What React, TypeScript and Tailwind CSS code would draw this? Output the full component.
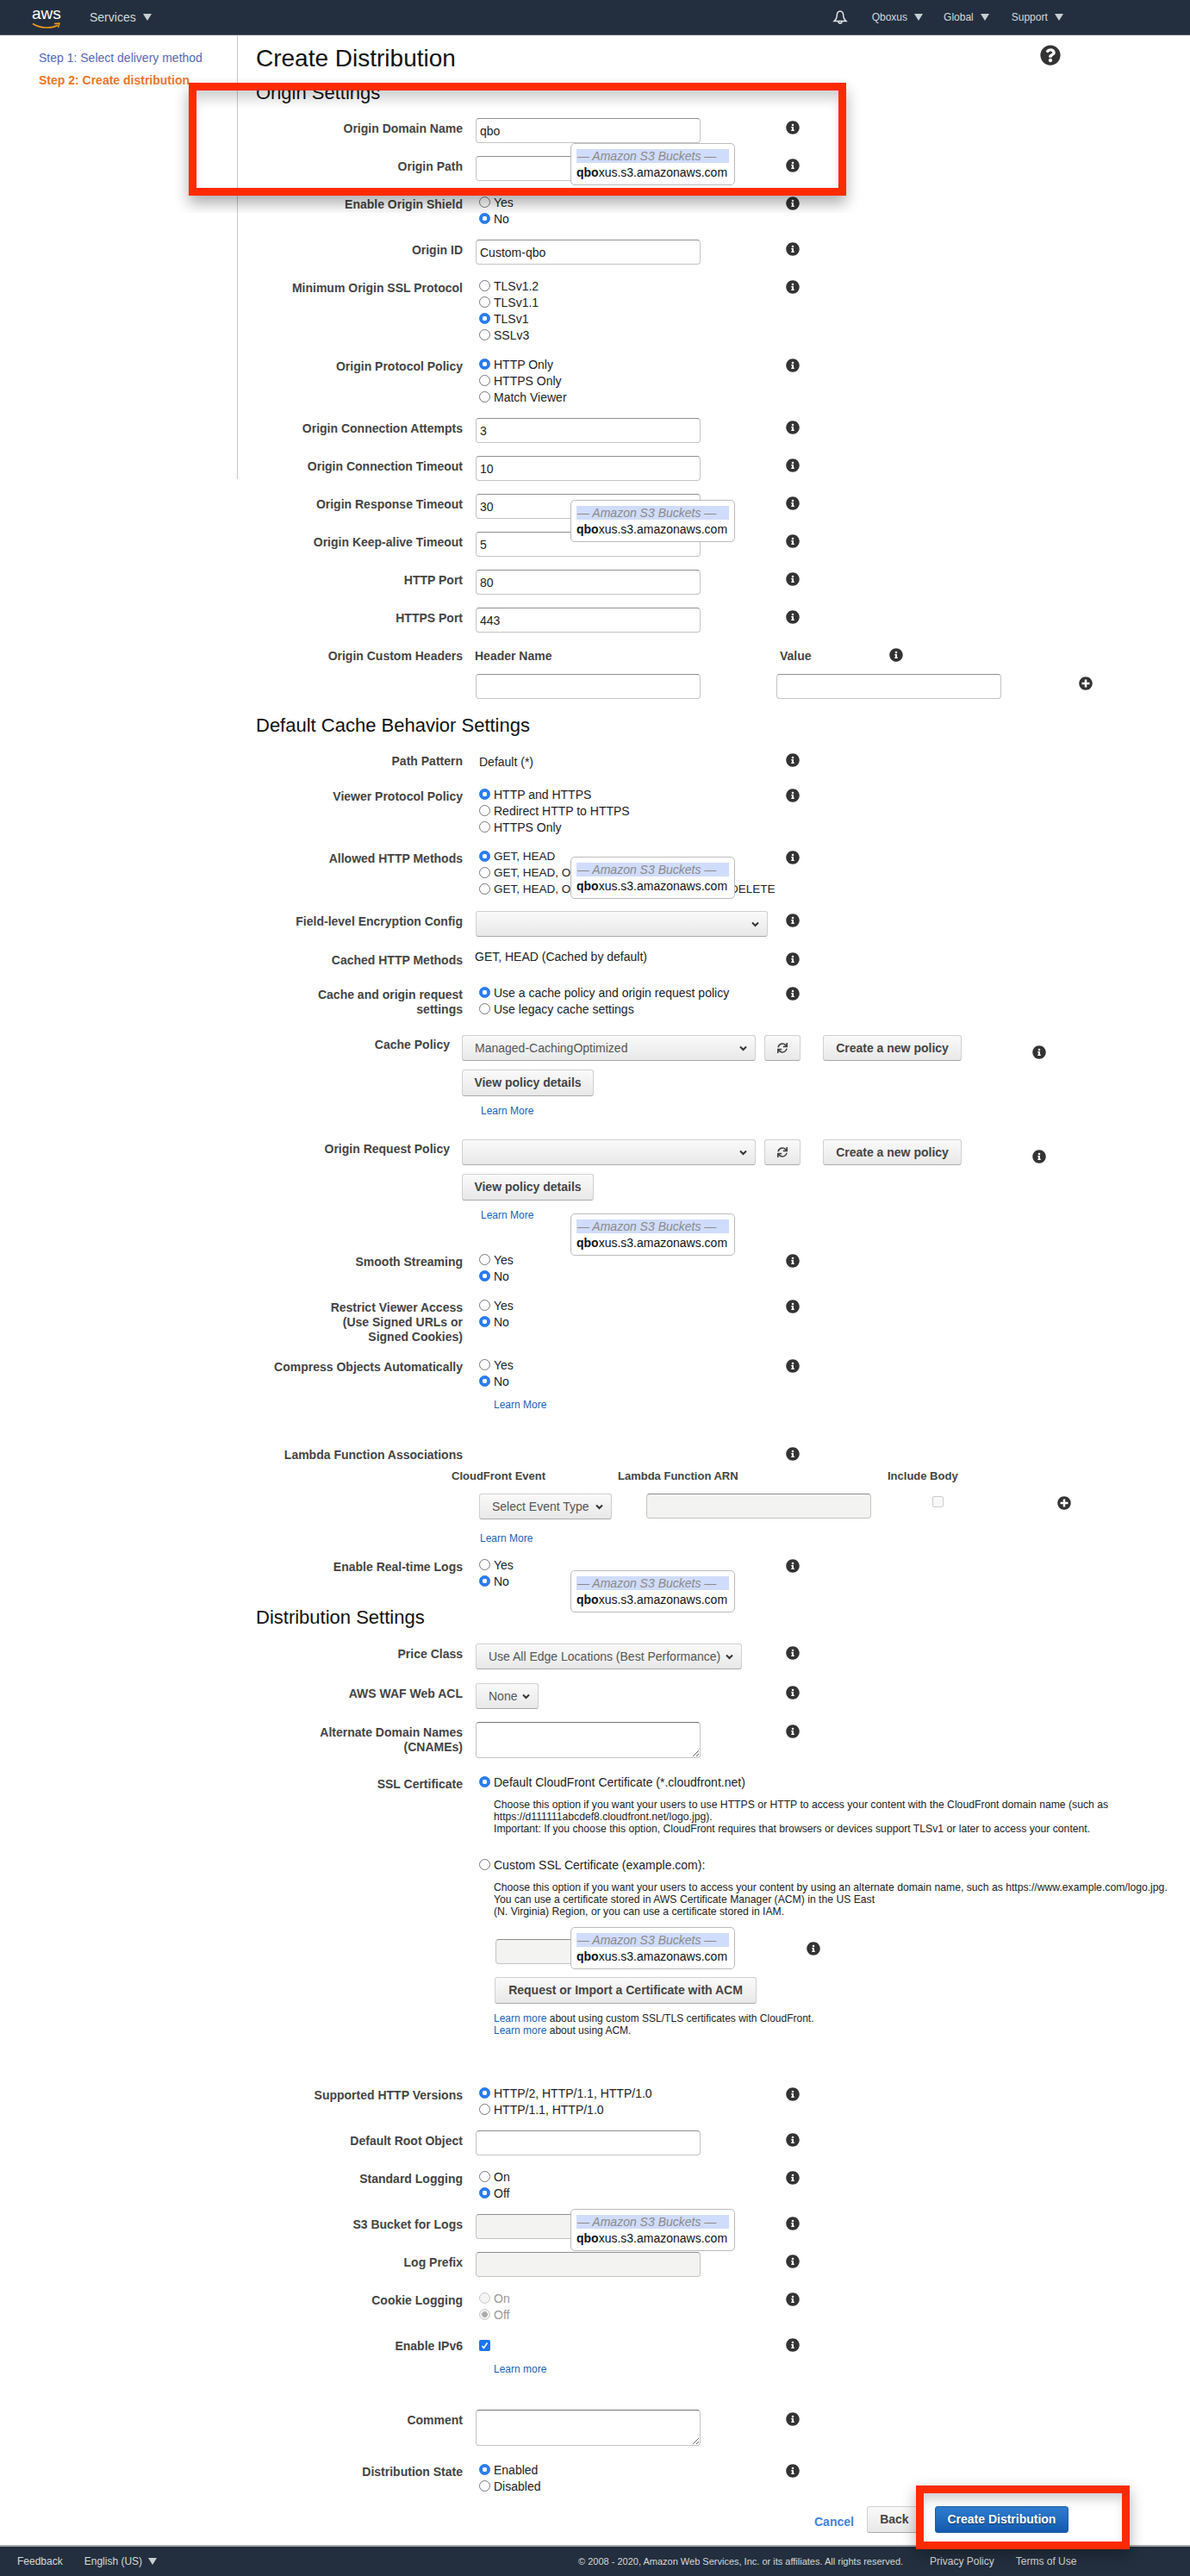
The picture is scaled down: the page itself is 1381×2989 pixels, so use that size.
import type { ReactNode } from 'react'
import clsx from 'clsx'
import { FaInfoCircle, FaPlusCircle, FaQuestionCircle, FaSync } from 'react-icons/fa'

function Caret({ className }: { className?: string }) {
  return (
    <svg width="10" height="8" viewBox="0 0 10 8" className={className}>
      <polygon points="0,0 10,0 5,8" fill="#c9ced3" />
    </svg>
  )
}

function Chevron() {
  return (
    <svg width="9" height="7" viewBox="0 0 9 7" className="shrink-0">
      <polyline points="1,1.5 4.5,5 8,1.5" fill="none" stroke="#333" strokeWidth="2" />
    </svg>
  )
}

function BellIcon({ className }: { className?: string }) {
  return (
    <svg width="18" height="18" viewBox="0 0 18 18" fill="none" stroke="#e4e7ea" strokeWidth="1.5" className={className}>
      <path d="M9 2 C6.2 2 5.2 5 5.2 8 C5.2 10.5 3.5 12 2 13.5 L16 13.5 C14.5 12 12.8 10.5 12.8 8 C12.8 5 11.8 2 9 2 Z" />
      <path d="M7 13.5 a2 2.6 0 0 0 4 0" />
    </svg>
  )
}

function Info({ className }: { className?: string }) {
  return <FaInfoCircle size={16} className={clsx('shrink-0 text-[#333]', className)} />
}

function Row({
  h,
  label,
  info = true,
  children,
}: {
  h: string
  label?: ReactNode
  info?: boolean
  children?: ReactNode
}) {
  return (
    <div className={clsx('flex', h)}>
      <div className="w-[261px] shrink-0 pt-[4px] text-right text-[14px] leading-[17px] font-bold text-[#444]">
        {label}
      </div>
      <div className={clsx('ml-[15px]', info ? 'w-[360px] shrink-0' : 'flex-1')}>{children}</div>
      {info && <Info className="mt-[3px]" />}
    </div>
  )
}

function Heading({ h, children }: { h: string; children: ReactNode }) {
  return <h2 className={clsx('pl-[21px] text-[22px] leading-[24px] text-[#111]', h)}>{children}</h2>
}

function TextInput({ value, disabled, className }: { value?: string; disabled?: boolean; className?: string }) {
  return (
    <input
      readOnly
      value={value ?? ''}
      disabled={disabled}
      className={clsx(
        'block h-[29px] w-[261px] rounded-[4px] border border-[#c4c4c4] border-t-[#8f8f8f] px-[4px] text-[14px] text-[#222] outline-none',
        disabled ? 'bg-[#f3f3f1]' : 'bg-white',
        className,
      )}
    />
  )
}

function Radios({
  options,
  checked,
  disabled,
  size = 'text-[14px]',
}: {
  options: string[]
  checked: number
  disabled?: boolean
  size?: string
}) {
  return (
    <div>
      {options.map((o, i) => (
        <label
          key={o}
          className={clsx(
            'flex h-[19px] items-center gap-[4px] pl-[4px] whitespace-nowrap',
            size,
            disabled ? 'text-[#999]' : 'text-[#222]',
          )}
        >
          <input
            type="radio"
            readOnly
            checked={i === checked}
            disabled={disabled}
            className={clsx(
              'h-[13px] w-[13px] shrink-0 appearance-none rounded-full border',
              disabled
                ? 'border-[#c8c8c8] bg-[#f4f4f4] checked:bg-[radial-gradient(circle,#aaa_0,#aaa_3px,#f0f0f0_3.5px)]'
                : 'border-[#777] bg-white checked:border-[#1d6fe6] checked:bg-[radial-gradient(circle,#fff_0,#fff_2.5px,#2b7df6_3px)]',
            )}
          />
          <span className="pt-[2px]">{o}</span>
        </label>
      ))}
    </div>
  )
}

function Sel({ value, className }: { value?: string; className: string }) {
  return (
    <div
      className={clsx(
        'flex h-[30px] shrink-0 items-center justify-between rounded-[3px] border border-[#d0d0d0] border-b-[#aaa] bg-gradient-to-b from-[#fafafa] to-[#e8e8e8] pr-[9px] pl-[14px] text-[14px] whitespace-nowrap text-[#555]',
        className,
      )}
    >
      <span>{value}</span>
      <Chevron />
    </div>
  )
}

function Btn({ children, className }: { children: ReactNode; className?: string }) {
  return (
    <button
      className={clsx(
        'flex h-[31px] shrink-0 items-center justify-center rounded-[3px] border border-[#d0d0d0] border-b-[#aaa] bg-gradient-to-b from-[#fafafa] to-[#e8e8e8] text-[14px] font-bold whitespace-nowrap text-[#444]',
        className,
      )}
    >
      {children}
    </button>
  )
}

function LearnMore({ children = 'Learn More' }: { children?: ReactNode }) {
  return <a className="text-[12px] leading-[14px] text-[#1a5fb4]">{children}</a>
}

function PolicyBlock({ h, label, value }: { h: string; label: string; value?: string }) {
  return (
    <div className={h}>
      <div className="flex h-[41px]">
        <div className="w-[246px] shrink-0 pt-[4px] text-right text-[14px] leading-[17px] font-bold text-[#444]">
          {label}
        </div>
        <Sel value={value} className="mt-[1px] ml-[14px] w-[341px]" />
        <Btn className="mt-[1px] ml-[10px] !h-[30px] w-[42px]">
          <FaSync size={12} className="text-[#444]" />
        </Btn>
        <Btn className="mt-[1px] ml-[26px] !h-[30px] w-[161px]">Create a new policy</Btn>
        <Info className="mt-[13px] ml-[82px]" />
      </div>
      <Btn className="ml-[260px] w-[153px]">View policy details</Btn>
      <div className="mt-[9px] ml-[282px] leading-[14px]">
        <LearnMore />
      </div>
    </div>
  )
}

function BucketPopup({ className }: { className: string }) {
  return (
    <div
      className={clsx(
        'absolute left-[662px] h-[48.5px] w-[191px] rounded-[5px] border border-[#bbb] bg-white px-[6px] pt-[6px] text-[14px]',
        className,
      )}
    >
      <div className="h-[16px] bg-[#d0dcfb] pl-[1px] leading-[16px] whitespace-nowrap text-[#8a8a8a] italic">
        — Amazon S3 Buckets —
      </div>
      <div className="mt-[3px] leading-[17px] whitespace-nowrap text-[#111]">
        <b>qbo</b>xus.s3.amazonaws.com
      </div>
    </div>
  )
}

export default function App() {
  return (
    <div className="relative w-full overflow-hidden bg-white font-['Liberation_Sans',Arial,sans-serif]">
      <header className="flex h-[41px] items-center border-b border-[#56606c] bg-[#232f3e] text-[12px] text-[#d5d9dc]">
        <div className="relative ml-[37px] h-[32px] w-[33px]">
          <span className="absolute top-[2px] left-0 w-full text-center text-[19px] leading-[20px] font-normal text-white">
            aws
          </span>
          <svg width="33" height="8" viewBox="0 0 33 8" className="absolute top-[22px] left-0">
            <path d="M1 1.5 C9 7, 23 7.5, 30 3" fill="none" stroke="#f39a1c" strokeWidth="1.6" />
            <path d="M26 1.5 L32 1 L30.5 6" fill="none" stroke="#f39a1c" strokeWidth="1.4" />
          </svg>
        </div>
        <span className="ml-[34px] text-[14px]">Services</span>
        <Caret className="ml-[8px]" />
        <BellIcon className="ml-[790px]" />
        <span className="ml-[28px]">Qboxus</span>
        <Caret className="ml-[8px]" />
        <span className="ml-[24px]">Global</span>
        <Caret className="ml-[8px]" />
        <span className="ml-[26px]">Support</span>
        <Caret className="ml-[8px]" />
      </header>

      <div className="flex">
        <aside className="h-[515px] w-[276px] shrink-0 border-r border-[#c8c8c8] pt-[18px] pl-[45px] text-[14px] leading-[17px]">
          <div className="text-[#5468b8]">Step 1: Select delivery method</div>
          <div className="mt-[9px] font-bold text-[#e8772a]">Step 2: Create distribution</div>
        </aside>

        <main className="min-w-0 flex-1">
          <div className="flex h-[55px] pt-[9px]">
            <h1 className="pl-[21px] text-[28px] leading-[36px] text-[#111]">Create Distribution</h1>
            <FaQuestionCircle size={24} className="mt-[2px] mr-[150px] ml-auto text-[#333]" />
          </div>
          <Heading h="h-[41px]">Origin Settings</Heading>

          <Row h="h-[44px]" label="Origin Domain Name"><TextInput value="qbo" /></Row>
          <Row h="h-[44px]" label="Origin Path"><TextInput /></Row>
          <Row h="h-[53px]" label="Enable Origin Shield"><Radios options={['Yes', 'No']} checked={1} /></Row>
          <Row h="h-[44px]" label="Origin ID"><TextInput value="Custom-qbo" /></Row>
          <Row h="h-[91px]" label="Minimum Origin SSL Protocol"><Radios options={['TLSv1.2', 'TLSv1.1', 'TLSv1', 'SSLv3']} checked={2} /></Row>
          <Row h="h-[72px]" label="Origin Protocol Policy"><Radios options={['HTTP Only', 'HTTPS Only', 'Match Viewer']} checked={0} /></Row>
          <Row h="h-[44px]" label="Origin Connection Attempts"><TextInput value="3" /></Row>
          <Row h="h-[44px]" label="Origin Connection Timeout"><TextInput value="10" /></Row>
          <Row h="h-[44px]" label="Origin Response Timeout"><TextInput value="30" /></Row>
          <Row h="h-[44px]" label="Origin Keep-alive Timeout"><TextInput value="5" /></Row>
          <Row h="h-[44px]" label="HTTP Port"><TextInput value="80" /></Row>
          <Row h="h-[44px]" label="HTTPS Port"><TextInput value="443" /></Row>
          <Row h="h-[33px]" label="Origin Custom Headers" info={false}>
            <div className="flex pt-[4px] text-[14px] leading-[17px] font-bold text-[#444]">
              <span className="w-[353px] -translate-x-[1px]">Header Name</span>
              <span className="w-[127px]">Value</span>
              <Info className="-mt-[1px]" />
            </div>
          </Row>
          <div className="ml-[276px] flex h-[48px]">
            <TextInput />
            <TextInput className="ml-[88px]" />
            <FaPlusCircle size={16} className="mt-[3px] ml-[90px] text-[#333]" />
          </div>

          <Heading h="h-[41px]">Default Cache Behavior Settings</Heading>
          <Row h="h-[41px]" label="Path Pattern">
            <div className="pt-[5px] pl-[4px] text-[14px] leading-[17px] text-[#222]">Default (*)</div>
          </Row>
          <Row h="h-[72px]" label="Viewer Protocol Policy"><Radios options={['HTTP and HTTPS', 'Redirect HTTP to HTTPS', 'HTTPS Only']} checked={0} /></Row>
          <Row h="h-[73px]" label="Allowed HTTP Methods"><Radios size="text-[13.5px]" options={['GET, HEAD', 'GET, HEAD, OPTIONS', 'GET, HEAD, OPTIONS, PUT, POST, PATCH, DELETE']} checked={0} /></Row>
          <Row h="h-[45px]" label="Field-level Encryption Config"><Sel className="w-[339px]" /></Row>
          <Row h="h-[40px]" label="Cached HTTP Methods">
            <div className="-ml-[1px] text-[14px] leading-[17px] text-[#222]">GET, HEAD (Cached by default)</div>
          </Row>
          <Row h="h-[58px]" label={<>Cache and origin request<br />settings</>}><Radios options={['Use a cache policy and origin request policy', 'Use legacy cache settings']} checked={0} /></Row>
          <PolicyBlock h="h-[121px]" label="Cache Policy" value="Managed-CachingOptimized" />
          <PolicyBlock h="h-[131px]" label="Origin Request Policy" />
          <Row h="h-[53px]" label="Smooth Streaming"><Radios options={['Yes', 'No']} checked={1} /></Row>
          <Row h="h-[69px]" label={<>Restrict Viewer Access<br />(Use Signed URLs or<br />Signed Cookies)</>}><Radios options={['Yes', 'No']} checked={1} /></Row>
          <Row h="h-[102px]" label="Compress Objects Automatically">
            <Radios options={['Yes', 'No']} checked={1} />
            <div className="mt-[10px] pl-[21px] leading-[14px]"><LearnMore /></div>
          </Row>

          <Row h="h-[29px]" label="Lambda Function Associations" />
          <div className="flex h-[28px] text-[13px] leading-[16px] font-bold text-[#444]">
            <span className="ml-[248px] w-[193px]">CloudFront Event</span>
            <span className="w-[313px]">Lambda Function ARN</span>
            <span>Include Body</span>
          </div>
          <div className="ml-[280px] flex h-[44px]">
            <Sel value="Select Event Type" className="w-[154px]" />
            <TextInput disabled className="ml-[40px]" />
            <span className="mt-[3px] ml-[71px] h-[13px] w-[13px] shrink-0 rounded-[2px] border border-[#ccc] bg-[#f8f8f8]" />
            <FaPlusCircle size={16} className="mt-[3px] ml-[132px] text-[#333]" />
          </div>
          <div className="ml-[281px] h-[29px] leading-[14px]"><LearnMore /></div>
          <Row h="h-[59px]" label="Enable Real-time Logs"><Radios options={['Yes', 'No']} checked={1} /></Row>

          <Heading h="h-[42px]">Distribution Settings</Heading>
          <Row h="h-[46px]" label="Price Class"><Sel value="Use All Edge Locations (Best Performance)" className="w-[309px]" /></Row>
          <Row h="h-[45px]" label="AWS WAF Web ACL"><Sel value="None" className="w-[73px]" /></Row>
          <Row h="h-[60px]" label={<>Alternate Domain Names<br />(CNAMEs)</>}>
            <textarea readOnly className="block h-[42px] w-[261px] resize-y rounded-[4px] border border-[#c4c4c4] border-t-[#777] bg-white outline-none" />
          </Row>
          <Row h="h-[361px]" label="SSL Certificate" info={false}>
            <Radios options={['Default CloudFront Certificate (*.cloudfront.net)']} checked={0} />
            <div className="mt-[10px] pl-[21px] text-[12.2px] leading-[14px] whitespace-nowrap text-[#222]">
              Choose this option if you want your users to use HTTPS or HTTP to access your content with the CloudFront domain name (such as<br />
              https://d111111abcdef8.cloudfront.net/logo.jpg).<br />
              Important: If you choose this option, CloudFront requires that browsers or devices support TLSv1 or later to access your content.
            </div>
            <div className="mt-[25px]">
              <Radios options={['Custom SSL Certificate (example.com):']} checked={-1} />
            </div>
            <div className="mt-[10px] pl-[21px] text-[12.2px] leading-[14px] whitespace-nowrap text-[#222]">
              Choose this option if you want your users to access your content by using an alternate domain name, such as https://www.example.com/logo.jpg.<br />
              You can use a certificate stored in AWS Certificate Manager (ACM) in the US East<br />
              (N. Virginia) Region, or you can use a certificate stored in IAM.
            </div>
            <div className="mt-[25px] flex pl-[23px]">
              <TextInput disabled />
              <Info className="mt-[3px] ml-[100px]" />
            </div>
            <Btn className="mt-[15px] ml-[22px] w-[304px]">Request or Import a Certificate with ACM</Btn>
            <div className="mt-[10px] pl-[21px] text-[12px] leading-[14px] whitespace-nowrap text-[#222]">
              <LearnMore>Learn more</LearnMore> about using custom SSL/TLS certificates with CloudFront.<br />
              <LearnMore>Learn more</LearnMore> about using ACM.
            </div>
          </Row>

          <Row h="h-[53px]" label="Supported HTTP Versions"><Radios options={['HTTP/2, HTTP/1.1, HTTP/1.0', 'HTTP/1.1, HTTP/1.0']} checked={0} /></Row>
          <Row h="h-[44px]" label="Default Root Object"><TextInput /></Row>
          <Row h="h-[53px]" label="Standard Logging"><Radios options={['On', 'Off']} checked={1} /></Row>
          <Row h="h-[44px]" label="S3 Bucket for Logs"><TextInput disabled /></Row>
          <Row h="h-[44px]" label="Log Prefix"><TextInput disabled /></Row>
          <Row h="h-[53px]" label="Cookie Logging"><Radios options={['On', 'Off']} checked={1} disabled /></Row>
          <Row h="h-[86px]" label="Enable IPv6">
            <span className="mt-[5px] ml-[4px] flex h-[13px] w-[13px] items-center justify-center rounded-[2px] bg-[#1d75f0]">
              <svg width="9" height="9" viewBox="0 0 9 9">
                <polyline points="1.5,5 3.5,7.5 7.5,1.5" fill="none" stroke="#fff" strokeWidth="1.6" />
              </svg>
            </span>
            <div className="mt-[13px] pl-[21px] leading-[14px]"><LearnMore>Learn more</LearnMore></div>
          </Row>
          <Row h="h-[60px]" label="Comment">
            <textarea readOnly className="block h-[42px] w-[261px] resize-y rounded-[4px] border border-[#c4c4c4] border-t-[#777] bg-white outline-none" />
          </Row>
          <Row h="h-[52px]" label="Distribution State"><Radios options={['Enabled', 'Disabled']} checked={0} /></Row>

          <div className="flex h-[45px] items-start pl-[669px]">
            <a className="mt-[8px] text-[14px] font-bold text-[#3f83d8]">Cancel</a>
            <Btn className="ml-[15px] w-[64px]">Back</Btn>
            <button className="ml-[15px] h-[31px] w-[155px] rounded-[3px] border border-[#1b5fa8] bg-gradient-to-b from-[#2f7dd0] to-[#1259ac] text-[14px] font-bold text-white [text-shadow:0_1px_1px_rgba(0,0,0,0.5)]">
              Create Distribution
            </button>
          </div>
        </main>
      </div>

      <footer className="flex h-[36px] items-center border-t-2 border-[#a5a8aa] bg-[#232f3e] text-[12px] text-[#d5d9dc]">
        <span className="ml-[20px]">Feedback</span>
        <span className="ml-[25px]">English (US)</span>
        <Caret className="ml-[7px]" />
        <span className="ml-[489px] text-[11px]">© 2008 - 2020, Amazon Web Services, Inc. or its affiliates. All rights reserved.</span>
        <span className="ml-[31px]">Privacy Policy</span>
        <span className="ml-[25px]">Terms of Use</span>
      </footer>

      <BucketPopup className="top-[166px]" />
      <BucketPopup className="top-[580px]" />
      <BucketPopup className="top-[994px]" />
      <BucketPopup className="top-[1408px]" />
      <BucketPopup className="top-[1822px]" />
      <BucketPopup className="top-[2236px]" />
      <BucketPopup className="top-[2563px]" />

      <div className="absolute top-[90px] left-[200px] h-[157px] w-[800px] overflow-hidden">
        <div className="absolute top-[6px] left-[19px] h-[131px] w-[763px] border-[9px] border-[#ff2a00] shadow-[0_9px_16px_rgba(0,0,0,0.32),inset_0_14px_14px_-4px_rgba(0,0,0,0.18)]" />
      </div>
      <div className="absolute top-[2884px] left-[1063px] h-[74px] w-[248px] border-[9px] border-[#ff2a00] shadow-[0_6px_16px_rgba(0,0,0,0.3),inset_0_10px_14px_-4px_rgba(0,0,0,0.2)]" />
    </div>
  )
}
